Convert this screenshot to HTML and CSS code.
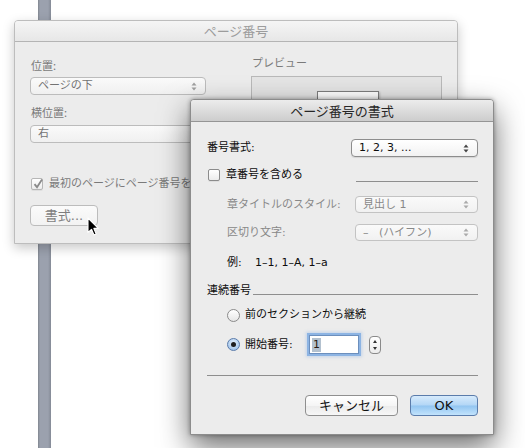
FILE: index.html
```html
<!DOCTYPE html>
<html lang="ja">
<head>
<meta charset="utf-8">
<link rel="stylesheet" href="styles.css">
</head>
<body>
<div class="desk">
  <div class="rail"></div>

  <div class="win back">
    <div class="titlebar back-title">ページ番号</div>
    <div class="back-body">
      <div class="col-left">
        <div class="blbl">位置:</div>
        <div class="popup bpopup first"><span>ページの下</span>
          <svg class="arr" width="6" height="9" viewBox="0 0 6 9"><polygon points="0.5,3.5 3,0.5 5.5,3.5" fill="#a0a0a0"/><polygon points="0.5,5.5 3,8.5 5.5,5.5" fill="#a0a0a0"/></svg>
        </div>
        <div class="blbl second">横位置:</div>
        <div class="popup bpopup"><span>右</span>
          <svg class="arr" width="6" height="9" viewBox="0 0 6 9"><polygon points="0.5,3.5 3,0.5 5.5,3.5" fill="#a0a0a0"/><polygon points="0.5,5.5 3,8.5 5.5,5.5" fill="#a0a0a0"/></svg>
        </div>
        <div class="bchkrow">
          <span class="chk bchk"><svg width="12" height="12" viewBox="0 0 12 12"><path d="M2.5 6.2 L5 9.2 L10 1.5" fill="none" stroke="#8a8a8a" stroke-width="1.8"/></svg></span>
          <span>最初のページにページ番号を表示する</span>
        </div>
        <div class="btn bbtn">書式...</div>
      </div>
      <div class="col-right">
        <div class="blbl">プレビュー</div>
        <div class="preview"><div class="page"></div></div>
      </div>
    </div>
  </div>

  <svg class="cursor" width="13" height="20" viewBox="0 0 13 20"><path d="M1 1 L1 15.5 L4.5 12.3 L7 18 L9.2 17 L6.8 11.4 L11.3 11.4 Z" fill="#000" stroke="#fff" stroke-width="1.1" stroke-linejoin="round"/></svg>

  <div class="win front">
    <div class="titlebar front-title">ページ番号の書式</div>
    <div class="front-body">
      <div class="row r1">
        <span class="dark">番号書式:</span>
        <div class="popup fpopup wide"><span>1, 2, 3, ...</span>
          <svg class="arr" width="6" height="9" viewBox="0 0 6 9"><polygon points="0.5,3.5 3,0.5 5.5,3.5" fill="#444"/><polygon points="0.5,5.5 3,8.5 5.5,5.5" fill="#444"/></svg>
        </div>
      </div>
      <div class="row r2">
        <span class="chk"></span>
        <span class="dark chklbl">章番号を含める</span>
        <span class="rule shortrule"></span>
      </div>
      <div class="row r3 indent">
        <span class="dis">章タイトルのスタイル:</span>
        <div class="popup dpopup"><span>見出し 1</span>
          <svg class="arr" width="6" height="9" viewBox="0 0 6 9"><polygon points="0.5,3.5 3,0.5 5.5,3.5" fill="#aaa"/><polygon points="0.5,5.5 3,8.5 5.5,5.5" fill="#aaa"/></svg>
        </div>
      </div>
      <div class="row r4 indent">
        <span class="dis">区切り文字:</span>
        <div class="popup dpopup"><span>–&nbsp;&nbsp;&nbsp;(ハイフン)</span>
          <svg class="arr" width="6" height="9" viewBox="0 0 6 9"><polygon points="0.5,3.5 3,0.5 5.5,3.5" fill="#aaa"/><polygon points="0.5,5.5 3,8.5 5.5,5.5" fill="#aaa"/></svg>
        </div>
      </div>
      <div class="row r5 indent">
        <span class="dark exl">例:</span>
        <span class="dark">1–1, 1–A, 1–a</span>
      </div>
      <div class="row r6">
        <span class="dark">連続番号</span>
        <span class="rule growrule"></span>
      </div>
      <div class="row r7 indent">
        <span class="radio"></span>
        <span class="dark">前のセクションから継続</span>
      </div>
      <div class="row r8 indent">
        <span class="radio on"><span class="dot"></span></span>
        <span class="dark startlbl">開始番号:</span>
        <div class="field"><span class="sel">1</span></div>
        <div class="stepper">
          <svg width="12" height="18" viewBox="0 0 12 18"><polygon points="4,7 6,4 8,7" fill="#333"/><polygon points="4,11 6,14 8,11" fill="#333"/></svg>
        </div>
      </div>
      <div class="sep"></div>
      <div class="row btns">
        <div class="btn cancel">キャンセル</div>
        <div class="btn ok">OK</div>
      </div>
    </div>
  </div>
</div>
</body>
</html>
```

FILE: styles.css
```css
* { box-sizing: border-box; }
html, body { margin: 0; padding: 0; }
body {
  width: 525px;
  height: 448px;
  overflow: hidden;
  background: #fff;
  font-family: "DejaVu Sans", "Noto Sans CJK JP", sans-serif;
  font-size: 11px;
  line-height: 14px;
}
.desk { position: relative; width: 525px; height: 448px; background: #fff; }

.rail {
  position: absolute;
  left: 38px; top: 0;
  width: 13px; height: 448px;
  background: linear-gradient(90deg, #80868f 0, #9ba1ae 2px, #9ba1ae 10px, #848a96 13px);
}

.win { position: absolute; background: #ececec; }
.back {
  left: 14px; top: 20px;
  width: 444px; height: 224px;
  border: 1px solid #bdbdbd;
  border-radius: 4px 4px 0 0;
  box-shadow: 0 4px 12px rgba(0,0,0,.22);
  z-index: 1;
}
.front {
  left: 190px; top: 99px;
  width: 304px; height: 336px;
  border: 1px solid #8c8c8c;
  border-radius: 4px 4px 0 0;
  box-shadow: 0 12px 30px rgba(0,0,0,.58), 0 0 4px rgba(0,0,0,.35);
  z-index: 3;
}
.cursor { position: absolute; left: 87px; top: 217px; z-index: 2; }

.titlebar {
  text-align: center;
  font-family: "Noto Sans CJK JP", sans-serif;
  font-size: 13px;
  border-radius: 3px 3px 0 0;
}
.back-title {
  height: 21px;
  line-height: 20px;
  color: #9c9c9c;
  background: linear-gradient(#f5f5f5, #e7e7e7);
  border-bottom: 1px solid #b4b4b4;
}
.front-title {
  height: 22px;
  line-height: 21px;
  color: #262626;
  background: linear-gradient(#ececec, #cdcdcd);
  border-bottom: 1px solid #959595;
}

/* back dialog */
.back-body { display: flex; gap: 45px; padding: 0 15px 0 15px; color: #7a7a7a; }
.col-left { width: 176px; display: flex; flex-direction: column; padding-top: 16px; }
.col-right { width: 192px; display: flex; flex-direction: column; padding-top: 13px; }
.blbl { height: 14px; padding-left: 1px; font-family: "Noto Sans CJK JP", sans-serif; white-space: nowrap; }
.blbl.second { margin-top: 10px; }

.popup {
  display: flex; align-items: center; justify-content: space-between;
  height: 18px;
  padding: 0 8px 0 7px;
  border-radius: 4px;
  white-space: nowrap;
}
.bpopup {
  margin-top: 5px;
  border: 1px solid #bcbcbc;
  background: linear-gradient(#fafafa, #f0f0f0);
  color: #737373;
}
.blbl.second + .bpopup { margin-top: 6px; }

.bchkrow { display: flex; align-items: center; gap: 6px; margin-top: 34px; height: 14px; white-space: nowrap; padding-left: 1px; }
.chk {
  display: inline-block; flex: none;
  width: 12px; height: 12px;
  border: 1px solid #8b8b8b;
  border-radius: 2px;
  background: linear-gradient(#fff, #ececec);
  box-shadow: 0 1px 0 rgba(0,0,0,.06);
}
.bchk { border-color: #b6b6b6; }
.bchk svg { display: block; margin: -1px 0 0 0; }

.btn {
  display: flex; align-items: center; justify-content: center;
  height: 21px;
  border: 1px solid #8f8f8f;
  border-radius: 4px;
  background: linear-gradient(#ffffff, #f5f5f5 50%, #ebebeb 52%, #f7f7f7);
  font-family: "DejaVu Sans", "Noto Sans CJK JP", sans-serif;
  font-size: 13px;
  color: #111;
}
.bbtn {
  width: 68px; margin-top: 14px;
  border-color: #bcbcbc;
  color: #7e7e7e;
  background: linear-gradient(#fbfbfb, #f2f2f2);
}

.preview {
  margin-top: 7px;
  height: 140px;
  border: 1px solid #b9b9b9;
  background: #e4e4e4;
  display: flex; justify-content: center;
  padding-top: 14px;
}
.page {
  width: 62px; height: 120px;
  margin-left: 3px;
  background: #fff;
  border: 1px solid #7e7e7e;
  box-shadow: 1px 1px 2px rgba(0,0,0,.2);
}

/* front dialog */
.front-body { padding: 17px 15px 0 16px; display: flex; flex-direction: column; }
.row { display: flex; align-items: center; white-space: nowrap; }
.indent { padding-left: 20px; }
.dark { color: #0d0d0d; }
.dis { color: #888; }
.r1 { height: 18px; }
.fpopup {
  margin-left: auto;
  border: 1px solid #8d8d8d;
  background: linear-gradient(#ffffff, #f2f2f2);
  box-shadow: 0 1px 1px rgba(0,0,0,.1);
  color: #0d0d0d;
  padding-left: 7px;
}
.wide { width: 127px; }
.r2 { height: 14px; margin-top: 11px; padding-left: 1px; }
.chklbl { margin-left: 6px; }
.rule { display: block; height: 1px; background: #8e8e8e; }
.shortrule { width: 122px; margin-left: auto; margin-top: 12px; }
.r3 { height: 17px; margin-top: 14px; }
.r4 { height: 17px; margin-top: 11px; }
.dpopup {
  margin-left: auto;
  width: 123px; height: 17px;
  border: 1px solid #c3c3c3;
  background: linear-gradient(#fafafa, #f1f1f1);
  color: #888;
}
.r5 { height: 14px; margin-top: 15px; }
.exl { width: 28px; }
.r6 { height: 14px; margin-top: 14px; }
.growrule { flex: 1; margin-left: 2px; margin-top: 6px; }
.r7 { height: 14px; margin-top: 10px; }
.radio {
  display: inline-flex; align-items: center; justify-content: center; flex: none;
  width: 13px; height: 13px;
  border: 1px solid #8a8a8a;
  border-radius: 50%;
  background: linear-gradient(#ffffff, #e6e6e6);
  margin-right: 5px;
}
.radio.on {
  border-color: #5a7bab;
  background: radial-gradient(circle at 50% 35%, #e4f0fc, #a9c9ec 70%, #8fb6e2);
}
.dot { width: 5px; height: 5px; border-radius: 50%; background: #1e1e1e; }
.r8 { height: 23px; margin-top: 11px; }
.startlbl { width: 64px; }
.field {
  width: 50px; height: 19px;
  border: 1px solid #6c8fbd;
  background: #fff;
  box-shadow: 0 0 0 2px #8db4e3, 0 0 3px 3px rgba(120,165,225,.35);
  display: flex; align-items: center;
  padding-left: 2px;
}
.sel { background: #b3c1cf; color: #2a1a10; padding: 0 1px; height: 14px; line-height: 14px; }
.stepper {
  margin-left: 10px;
  width: 12px; height: 18px;
  border: 1px solid #8a8a8a;
  border-radius: 4px;
  background: linear-gradient(#fff, #ececec);
  overflow: hidden;
}
.stepper svg { display: block; margin: -1px 0 0 -1px; }
.sep { height: 1px; background: #8e8e8e; margin-top: 19px; }
.btns { justify-content: flex-end; margin-top: 19px; height: 21px; }
.cancel { width: 93px; }
.ok {
  width: 68px; margin-left: 12px;
  border-color: #5b7cab;
  background: linear-gradient(#d7ebfc, #b3d6f6 48%, #92c5f1 52%, #c2e3fc);
}
```
